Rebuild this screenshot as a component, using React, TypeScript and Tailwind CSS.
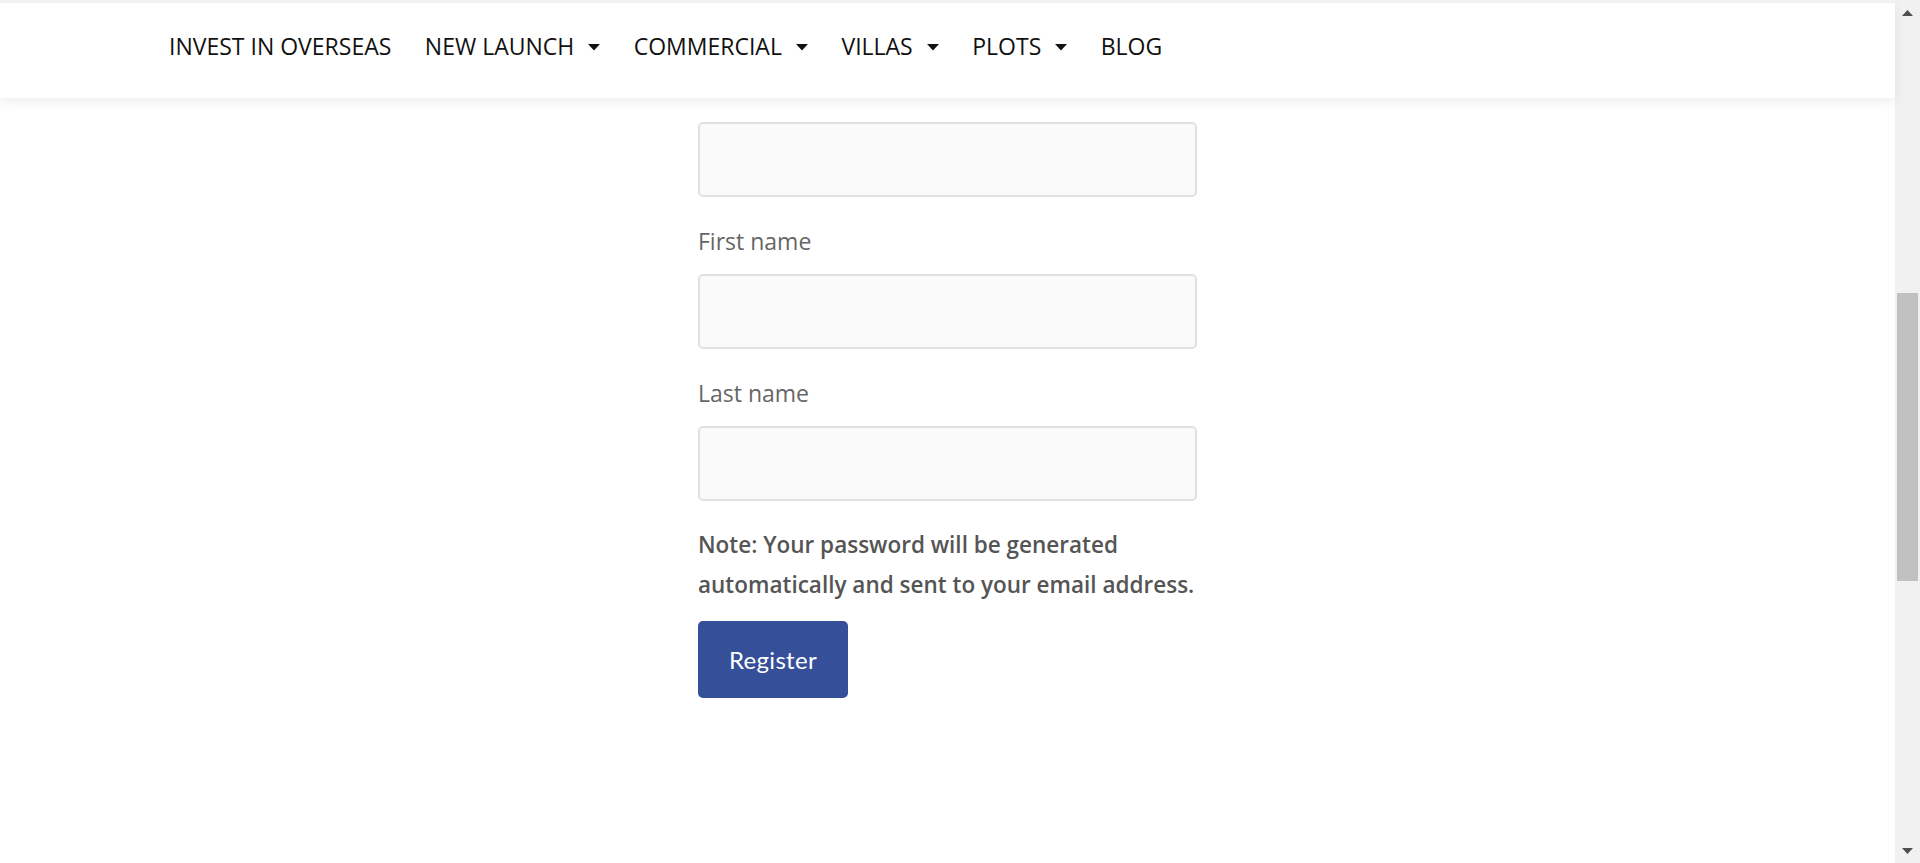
const navItems = [
    { label: "INVEST IN OVERSEAS", caret: false },
    { label: "NEW LAUNCH", caret: true },
    { label: "COMMERCIAL", caret: true },
    { label: "VILLAS", caret: true },
    { label: "PLOTS", caret: true },
    { label: "BLOG", caret: false },
];

const Caret = () => (
    <svg width="12" height="7" viewBox="0 0 12 7" className="mt-[2px]">
        <path d="M0 0 L12 0 L6 6.5 Z" fill="#111" />
    </svg>
);

const Field = ({ label }: { label?: string }) => (
    <div className="flex flex-col">
        {label && <label className="text-[23px] leading-[34px] text-[#666] mt-[27px] mb-[16px]">{label}</label>}
        <input
            type="text"
            className="h-[75px] w-full rounded-[5px] border-2 border-[#e0e0e0] bg-[#fafafa] outline-none" />
    </div>
);

const App = () => {
    return (
        <div className="flex h-[863px] w-full overflow-hidden bg-white font-['Open_Sans',sans-serif]">
            <div className="flex-1 flex flex-col min-w-0">
                <div className="h-[3px] bg-[#f4f4f4]"></div>
                <header className="h-[95px] bg-white shadow-[0_4px_12px_rgba(0,0,0,0.07)] relative z-10">
                    <nav className="flex items-center gap-[33.5px] pl-[169px] pt-[26px]">
                        {navItems.map((item) => (
                            <div key={item.label} className="flex items-center gap-[14px] text-[23px] leading-[34px] text-[#111] whitespace-nowrap">
                                <span>{item.label}</span>
                                {item.caret && <Caret />}
                            </div>
                        ))}
                    </nav>
                </header>

                <form className="w-[499px] mx-auto pt-[24px] flex flex-col">
                    <Field />
                    <Field label="First name" />
                    <Field label="Last name" />

                    <p className="mt-[24px] text-[22.5px] leading-[39.5px] font-semibold text-[#555] whitespace-nowrap">
                        Note: Your password will be generated
                        <br />
                        automatically and sent to your email address.
                    </p>

                    <button
                        type="button"
                        className="mt-[17px] h-[77px] w-[150px] rounded-[5px] bg-[#354f99] text-white text-[24px] tracking-[0.3px] font-['Lato',sans-serif]">
                        Register
                    </button>
                </form>
            </div>

            {/* fake scrollbar */}
            <div className="w-[25px] bg-[#f1f1f1] flex flex-col items-center">
                <div className="h-[25px] flex items-center justify-center">
                    <svg width="11" height="6" viewBox="0 0 11 6"><path d="M0 6 L11 6 L5.5 0 Z" fill="#505050" /></svg>
                </div>
                <div className="mt-[268px] h-[288px] w-[21px] bg-[#c1c1c1]"></div>
                <div className="flex-1"></div>
                <div className="h-[25px] flex items-center justify-center">
                    <svg width="11" height="6" viewBox="0 0 11 6"><path d="M0 0 L11 0 L5.5 6 Z" fill="#505050" /></svg>
                </div>
            </div>
        </div>
    );
};

export default App;
